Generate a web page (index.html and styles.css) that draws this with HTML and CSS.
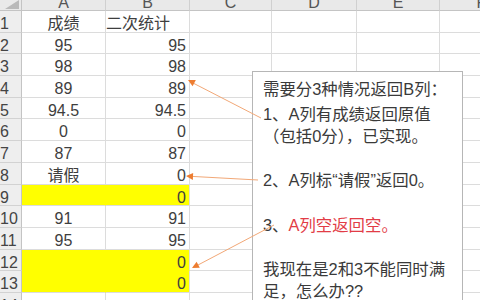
FILE: index.html
```html
<!DOCTYPE html>
<html lang="zh-CN">
<head>
<meta charset="utf-8">
<title>Sheet</title>
<link rel="stylesheet" href="styles.css">
</head>
<body>
<div class="page">
  <div class="sheet">
    <div class="row hdr">
      <div class="corner"><span class="tri"></span></div>
      <div>A</div><div>B</div><div>C</div><div>D</div><div>E</div><div>F</div>
    </div>
    <div class="row"><div class="rh">1</div><div class="m">成绩</div><div>二次统计</div><div></div><div></div><div></div><div></div></div>
    <div class="row"><div class="rh">2</div><div class="m">95</div><div class="n">95</div><div></div><div></div><div></div><div></div></div>
    <div class="row"><div class="rh">3</div><div class="m">98</div><div class="n">98</div><div></div><div></div><div></div><div></div></div>
    <div class="row"><div class="rh">4</div><div class="m">89</div><div class="n">89</div><div></div><div></div><div></div><div></div></div>
    <div class="row"><div class="rh">5</div><div class="m">94.5</div><div class="n">94.5</div><div></div><div></div><div></div><div></div></div>
    <div class="row"><div class="rh">6</div><div class="m">0</div><div class="n">0</div><div></div><div></div><div></div><div></div></div>
    <div class="row"><div class="rh">7</div><div class="m">87</div><div class="n">87</div><div></div><div></div><div></div><div></div></div>
    <div class="row"><div class="rh">8</div><div class="m">请假</div><div class="n">0</div><div></div><div></div><div></div><div></div></div>
    <div class="row"><div class="rh">9</div><div class="m y ya"></div><div class="n y">0</div><div></div><div></div><div></div><div></div></div>
    <div class="row"><div class="rh">10</div><div class="m">91</div><div class="n">91</div><div></div><div></div><div></div><div></div></div>
    <div class="row"><div class="rh">11</div><div class="m">95</div><div class="n">95</div><div></div><div></div><div></div><div></div></div>
    <div class="row"><div class="rh">12</div><div class="m y ya yb"></div><div class="n y yb">0</div><div></div><div></div><div></div><div></div></div>
    <div class="row"><div class="rh">13</div><div class="m y ya"></div><div class="n y">0</div><div></div><div></div><div></div><div></div></div>
    <div class="row"><div class="rh">14</div><div></div><div></div><div></div><div></div><div></div><div></div></div>
  </div>

  <div class="note">
    <div class="ln first">需要分3种情况返回B列：</div>
    <div class="ln">1、A列有成绩返回原值</div>
    <div class="ln">（包括0分），已实现。</div>
    <div class="ln">&nbsp;</div>
    <div class="ln">2、A列标“请假”返回0。</div>
    <div class="ln">&nbsp;</div>
    <div class="ln">3、<span class="red">A列空返回空。</span></div>
    <div class="ln">&nbsp;</div>
    <div class="ln">我现在是2和3不能同时满</div>
    <div class="ln">足，怎么办??</div>
  </div>

  <svg class="arrows" width="480" height="300" viewBox="0 0 480 300" xmlns="http://www.w3.org/2000/svg">
    <g stroke="#f2a877" stroke-width="1" fill="none">
      <line x1="261" y1="118" x2="193" y2="83"/>
      <line x1="258" y1="180" x2="192" y2="176.4"/>
      <line x1="274" y1="225" x2="198" y2="265"/>
    </g>
    <g fill="#ed7d31">
      <polygon points="188,80 195.8,80.1 192.6,86.3"/>
      <polygon points="186,176 193.2,172.9 192.8,179.9"/>
      <polygon points="192,268 199.8,267.85 196.6,261.65"/>
    </g>
  </svg>
</div>
</body>
</html>
```

FILE: styles.css
```css
html, body {
  margin: 0;
  padding: 0;
  background: #ffffff;
}

.page {
  position: relative;
  width: 480px;
  height: 300px;
  overflow: hidden;
  font-family: "Liberation Sans", "Noto Sans CJK SC", sans-serif;
  color: #3e3e3e;
}

.sheet {
  display: flex;
  flex-direction: column;
}

.row {
  display: grid;
  grid-template-columns: 22px 84px 84px 82px 85px 83px 84px;
  grid-template-rows: 21.7px;
}

.row > div {
  box-sizing: border-box;
  border-right: 1px solid #dcdcdc;
  border-bottom: 1px solid #dcdcdc;
  overflow: hidden;
  white-space: nowrap;
  font-size: 16px;
  line-height: 20.7px;
  padding-top: 3px;
}

.row > .m {
  text-align: center;
}

.row > .n {
  text-align: right;
  padding-right: 3px;
}

.row > .y {
  background: #ffff00;
}

.row > .ya {
  border-right-color: #ffff00;
}

.row > .yb {
  border-bottom-color: #ffff00;
}

.row > .rh {
  background: #eeeeee;
  color: #444444;
  border-right-color: #c4c4c4;
  border-bottom-color: #d2d2d2;
  padding-left: 0;
  text-align: left;
}

.hdr {
  grid-template-rows: 11px;
}

.hdr > div {
  background: #e9e9e9;
  color: #555555;
  text-align: center;
  line-height: 6px;
  padding-top: 0;
  border-bottom-color: #c4c4c4;
  border-right-color: #d0d0d0;
}

.hdr > .corner {
  position: relative;
  border-right-color: #c4c4c4;
}

.tri {
  position: absolute;
  right: 2px;
  bottom: 1px;
  width: 0;
  height: 0;
  border-left: 14px solid transparent;
  border-bottom: 9px solid #b9b9b9;
}

.note {
  position: absolute;
  left: 252px;
  top: 71px;
  width: 211px;
  height: 250px;
  box-sizing: border-box;
  background: #ffffff;
  border: 1px solid #b6b6b6;
  padding: 6px 0 0 10px;
  font-size: 16.4px;
  line-height: 22.2px;
  color: #3a3a3a;
  white-space: nowrap;
}

.note .first {
  margin-bottom: 2.5px;
}

.red {
  color: #e23c46;
}

.arrows {
  position: absolute;
  left: 0;
  top: 0;
  pointer-events: none;
}
```
